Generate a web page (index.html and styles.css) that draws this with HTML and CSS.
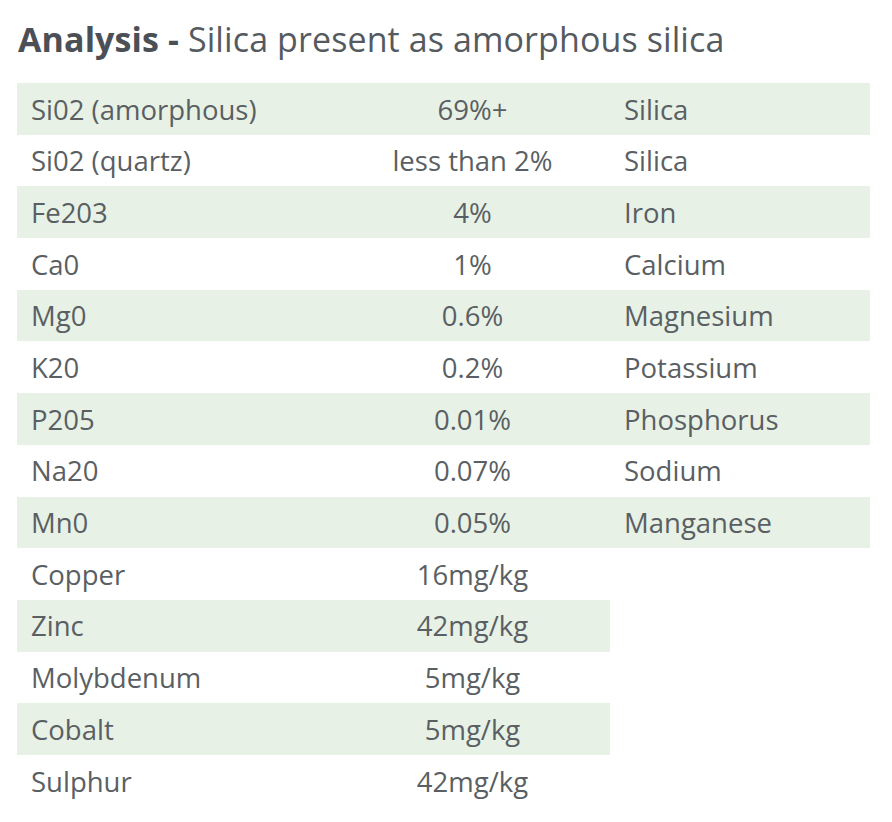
FILE: index.html
```html
<!DOCTYPE html>
<html lang="en">
<head>
<meta charset="utf-8">
<title>Analysis</title>
<link rel="stylesheet" href="styles.css">
</head>
<body>
<div class="page">
  <h1 class="title"><strong>Analysis -</strong> Silica present as amorphous silica</h1>
  <table class="analysis">
    <colgroup>
      <col class="c-name">
      <col class="c-val">
      <col class="c-desc">
    </colgroup>
    <tbody>
      <tr class="alt"><td>Si02 (amorphous)</td><td class="val">69%+</td><td>Silica</td></tr>
      <tr><td>Si02 (quartz)</td><td class="val">less than 2%</td><td>Silica</td></tr>
      <tr class="alt"><td>Fe203</td><td class="val">4%</td><td>Iron</td></tr>
      <tr><td>Ca0</td><td class="val">1%</td><td>Calcium</td></tr>
      <tr class="alt"><td>Mg0</td><td class="val">0.6%</td><td>Magnesium</td></tr>
      <tr><td>K20</td><td class="val">0.2%</td><td>Potassium</td></tr>
      <tr class="alt"><td>P205</td><td class="val">0.01%</td><td>Phosphorus</td></tr>
      <tr><td>Na20</td><td class="val">0.07%</td><td>Sodium</td></tr>
      <tr class="alt"><td>Mn0</td><td class="val">0.05%</td><td>Manganese</td></tr>
      <tr><td>Copper</td><td class="val">16mg/kg</td><td class="empty"></td></tr>
      <tr class="alt"><td>Zinc</td><td class="val">42mg/kg</td><td class="empty"></td></tr>
      <tr><td>Molybdenum</td><td class="val">5mg/kg</td><td class="empty"></td></tr>
      <tr class="alt"><td>Cobalt</td><td class="val">5mg/kg</td><td class="empty"></td></tr>
      <tr><td>Sulphur</td><td class="val">42mg/kg</td><td class="empty"></td></tr>
    </tbody>
  </table>
</div>
</body>
</html>
```
FILE: styles.css
```css
html, body {
  margin: 0;
  padding: 0;
  background: #ffffff;
}

.page {
  padding: 16px 0 0 17px;
  font-family: "Open Sans", "Liberation Sans", sans-serif;
  color: #5a5f63;
}

.title {
  margin: 0 0 21px 1px;
  font-size: 34px;
  font-weight: 400;
  line-height: normal;
  color: #555a5f;
  letter-spacing: 0.1px;
}

.title strong {
  font-weight: 700;
  color: #4b5056;
}

.analysis {
  border-collapse: collapse;
  table-layout: fixed;
  width: 853px;
  font-size: 27.5px;
}

.c-name { width: 318px; }
.c-val { width: 275px; }
.c-desc { width: 260px; }

.analysis td {
  height: 51.7px;
  padding: 1px 0 0 14px;
  box-sizing: border-box;
  vertical-align: middle;
  white-space: nowrap;
  line-height: 1;
}

.analysis td.val {
  padding: 1px 0 0 0;
  text-align: center;
}

.analysis tr.alt td {
  background: #e7f1e6;
}

.analysis tr.alt td.empty {
  background: transparent;
}
```
